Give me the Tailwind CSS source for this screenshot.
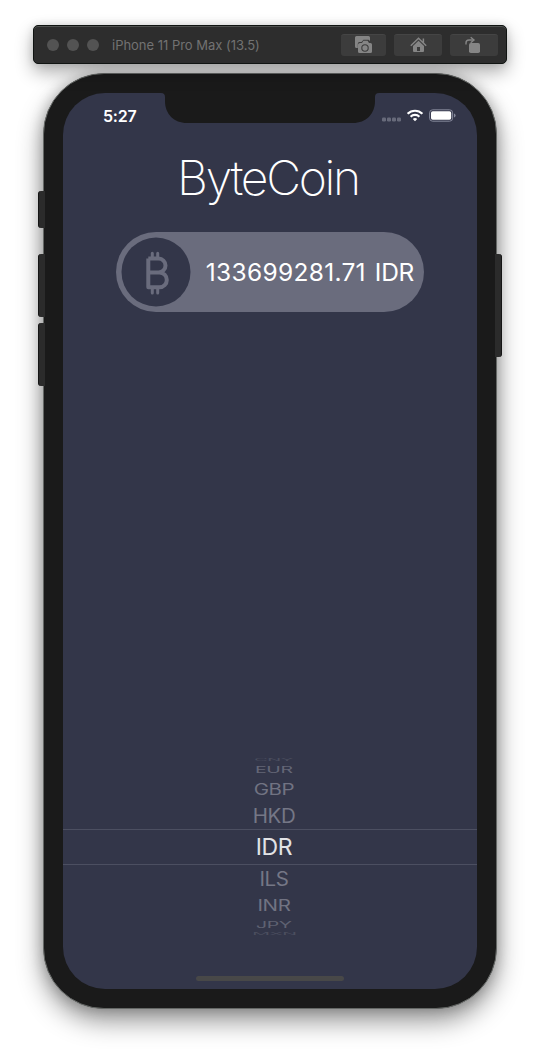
<!DOCTYPE html>
<html lang="en">
<head>
<meta charset="utf-8">
<title>ByteCoin</title>
<script src="https://cdn.jsdelivr.net/npm/@tailwindcss/browser@4"></script>
</head>
<body class="w-[540px] h-[1051px] overflow-hidden bg-white font-['Inter',sans-serif] flex flex-col items-center pt-[25px]">

  <!-- Simulator title bar -->
  <header class="relative z-10 w-[474px] h-[39px] shrink-0 rounded-[5px] bg-[#2d2d2d] border border-[#101412] shadow-[inset_0_1px_0_#505250,0_8px_18px_rgba(0,0,0,0.32),0_0_8px_rgba(0,0,0,0.12)] flex items-center pl-[13px] pr-2">
    <div class="flex gap-2">
      <span class="size-3 rounded-full bg-[#535353]"></span>
      <span class="size-3 rounded-full bg-[#535353]"></span>
      <span class="size-3 rounded-full bg-[#535353]"></span>
    </div>
    <h2 class="ml-[13px] pt-px text-[13px] leading-4 text-[#727272] tracking-[-0.02px] whitespace-nowrap">iPhone 11 Pro Max (13.5)</h2>
    <div class="ml-auto flex gap-2">
      <button class="w-[45px] h-[22px] rounded-[3px] bg-[#3c3c3c] border-t border-[#454545]">
        <svg class="block -mt-px" width="45" height="22" viewBox="0 0 45 22">
          <path d="M15.500 2h12q1.500 0 1.500 1.500V7l-1.500-1.200h-5L20.500 8h-2q-1.700 0-1.700 1.700V14h-1.300q-1.500 0-1.500-1.500v-9Q14 2 15.500 2z" fill="#858585"/>
          <path d="M19 9h2l1.400-2.200h4.200L28 9h1.500q1.500 0 1.500 1.500v7q0 1.500-1.500 1.500h-11q-1.500 0-1.500-1.500v-7Q17 9 19 9z" fill="#858585"/>
          <circle cx="24" cy="14" r="3.200" fill="#858585" stroke="#3c3c3c" stroke-width="1.100"/>
        </svg>
      </button>
      <button class="w-[48px] h-[22px] rounded-[3px] bg-[#3c3c3c] border-t border-[#454545]">
        <svg class="block -mt-px" width="48" height="22" viewBox="0 0 48 22">
          <path d="M16.800 11.700l7.700-7.400 7.700 7.400M29.400 4.500v4" fill="none" stroke="#858585" stroke-width="1.500"/>
          <path d="M19 12l5.500-5.300L30 12v5q0 1-1 1h-9q-1 0-1-1z" fill="#858585"/>
          <rect x="23" y="13" width="3" height="4" fill="#3c3c3c"/>
        </svg>
      </button>
      <button class="w-[48px] h-[22px] rounded-[3px] bg-[#3c3c3c] border-t border-[#454545]">
        <svg class="block -mt-px" width="48" height="22" viewBox="0 0 48 22">
          <rect x="19" y="9" width="11" height="10" rx="1.800" fill="#858585"/>
          <path d="M16 10.500V9q0-3 3-3h4" fill="none" stroke="#858585" stroke-width="1.400"/>
          <path d="M20.700 3.200L24 6l-3.300 2.800" fill="none" stroke="#858585" stroke-width="1.400"/>
        </svg>
      </button>
    </div>
  </header>

  <!-- Device -->
  <main class="relative mt-[9px] w-[454px] h-[936px] shrink-0 rounded-[61px] bg-[#1a1a1a] border border-[#656866] p-[19px] shadow-[0_12px_26px_rgba(0,0,0,0.42),0_0_14px_rgba(0,0,0,0.22)]">
    <span class="absolute -left-[6px] top-[117px] w-[7px] h-[37px] rounded-l-[3px] bg-[#2b2b2b] border-l border-[#151515]"></span>
    <span class="absolute -left-[6px] top-[180px] w-[7px] h-[63px] rounded-l-[3px] bg-[#2b2b2b] border-l border-[#151515]"></span>
    <span class="absolute -left-[6px] top-[249px] w-[7px] h-[63px] rounded-l-[3px] bg-[#2b2b2b] border-l border-[#151515]"></span>
    <span class="absolute -right-[6px] top-[180px] w-[7px] h-[103px] rounded-r-[3px] bg-[#2b2b2b] border-r border-[#151515]"></span>

    <div class="relative w-[414px] h-[896px] rounded-[42px] overflow-hidden bg-[#333649] flex flex-col items-center">
      <!-- Notch -->
      <svg class="absolute left-[98px] top-0" width="218" height="30" viewBox="0 0 218 30">
        <path d="M0 0h218q-4 0-4 4v4c0 13-9 22-22 22H26C13 30 4 21 4 8V4Q4 0 0 0z" fill="#1a1a1a"/>
      </svg>

      <!-- Status bar -->
      <div class="w-full h-[44px] shrink-0 flex items-center pl-[40px] pr-[21px] pt-[2px]">
        <time class="text-[16px] leading-5 font-semibold text-white tracking-[-0.2px]">5:27</time>
        <svg class="ml-auto" width="74" height="14" viewBox="0 0 74 14">
          <g fill="#676a7a">
            <rect x="0" y="8.500" width="4" height="4" rx="1.300"/><rect x="5" y="8.500" width="4" height="4" rx="1.300"/><rect x="10" y="8.500" width="4" height="4" rx="1.300"/><rect x="15" y="8.500" width="4" height="4" rx="1.300"/>
          </g>
          <g fill="none" stroke="#fff" stroke-width="2.200">
            <path d="M25.600 4.800a10.500 10.500 0 0 1 14.800 0"/>
            <path d="M28.600 7.700a6.300 6.300 0 0 1 8.800 0"/>
          </g>
          <path d="M30.800 9.900a3.300 3.300 0 0 1 4.400 0L33 12.300z" fill="#fff"/>
          <rect x="47.600" y="0.800" width="23" height="11.400" rx="3" fill="none" stroke="#85889a" stroke-width="1"/>
          <rect x="49" y="2.200" width="20.200" height="8.600" rx="1.700" fill="#fff"/>
          <path d="M72 4.500q1.600.6 1.600 2t-1.600 2z" fill="#85889a"/>
        </svg>
      </div>

      <h1 class="mt-[11px] h-[60px] leading-[60px] text-[48px] font-extralight text-white tracking-[-2.250px] whitespace-nowrap pr-[4px]">ByteCoin</h1>

      <!-- Price pill -->
      <section class="mt-[24px] w-[308px] h-[80px] shrink-0 rounded-full bg-[#6a6c7d] flex items-center pl-[5px] pr-[10px] text-white text-[24.500px] leading-[30px]">
        <svg class="shrink-0" width="70" height="70" viewBox="0 0 70 70">
          <circle cx="35" cy="35" r="34.500" fill="#333649"/>
          <path d="M27.300 21.500h10.200a7 7 0 0 1 0 14H27.300M37.500 35.500h1a7.300 7.400 0 0 1 0 14.800H27.300V21.500" fill="none" stroke="#6a6c7d" stroke-width="4" stroke-linejoin="round"/>
          <path d="M31.300 16.200v4M36.700 16.200v4M31.300 51v5M36.700 51v5" stroke="#6a6c7d" stroke-width="3" stroke-linecap="round"/>
        </svg>
        <span class="ml-auto tracking-[0.3px]">133699281.71</span>
        <span class="ml-[9px] tracking-[-0.3px]">IDR</span>
      </section>

      <!-- Currency picker -->
      <ul class="mt-auto mb-[39px] w-full pl-[8px] text-center text-[20.500px] tracking-[-0.4px] leading-none text-[#757786] flex flex-col">
        <li class="h-[5px] flex items-center justify-center pt-[2px]"><span class="block scale-x-90 scale-y-[0.16] text-[#4b4e5f]">CNY</span></li>
        <li class="h-[15px] flex items-center justify-center pt-[2px]"><span class="block scale-x-95 scale-y-[0.46] text-[#646676]">EUR</span></li>
        <li class="h-[24px] flex items-center justify-center pt-[2px]"><span class="block scale-y-[0.77] text-[#717382]">GBP</span></li>
        <li class="h-[28px] flex items-center justify-center pt-[2px]"><span class="block scale-y-[0.95]">HKD</span></li>
        <li class="h-[36px] -ml-[8px] pl-[8px] flex items-center justify-center border-y border-[#4c4f61] text-[23px] text-[#e2e3e6]">IDR</li>
        <li class="h-[28px] flex items-center justify-center"><span class="block scale-y-[0.95]">ILS</span></li>
        <li class="h-[24px] flex items-center justify-center pt-[2px]"><span class="block scale-y-[0.77] text-[#717382]">INR</span></li>
        <li class="h-[15px] flex items-center justify-center pt-[2px]"><span class="block scale-x-95 scale-y-[0.46] text-[#5f6272]">JPY</span></li>
        <li class="h-[5px] flex items-center justify-center"><span class="block scale-x-95 scale-y-[0.14] text-[#4b4e5f]">MXN</span></li>
      </ul>

      <div class="mb-2 w-[148px] h-[5px] shrink-0 rounded-full bg-[#484848]"></div>
    </div>
  </main>
</body>
</html>
